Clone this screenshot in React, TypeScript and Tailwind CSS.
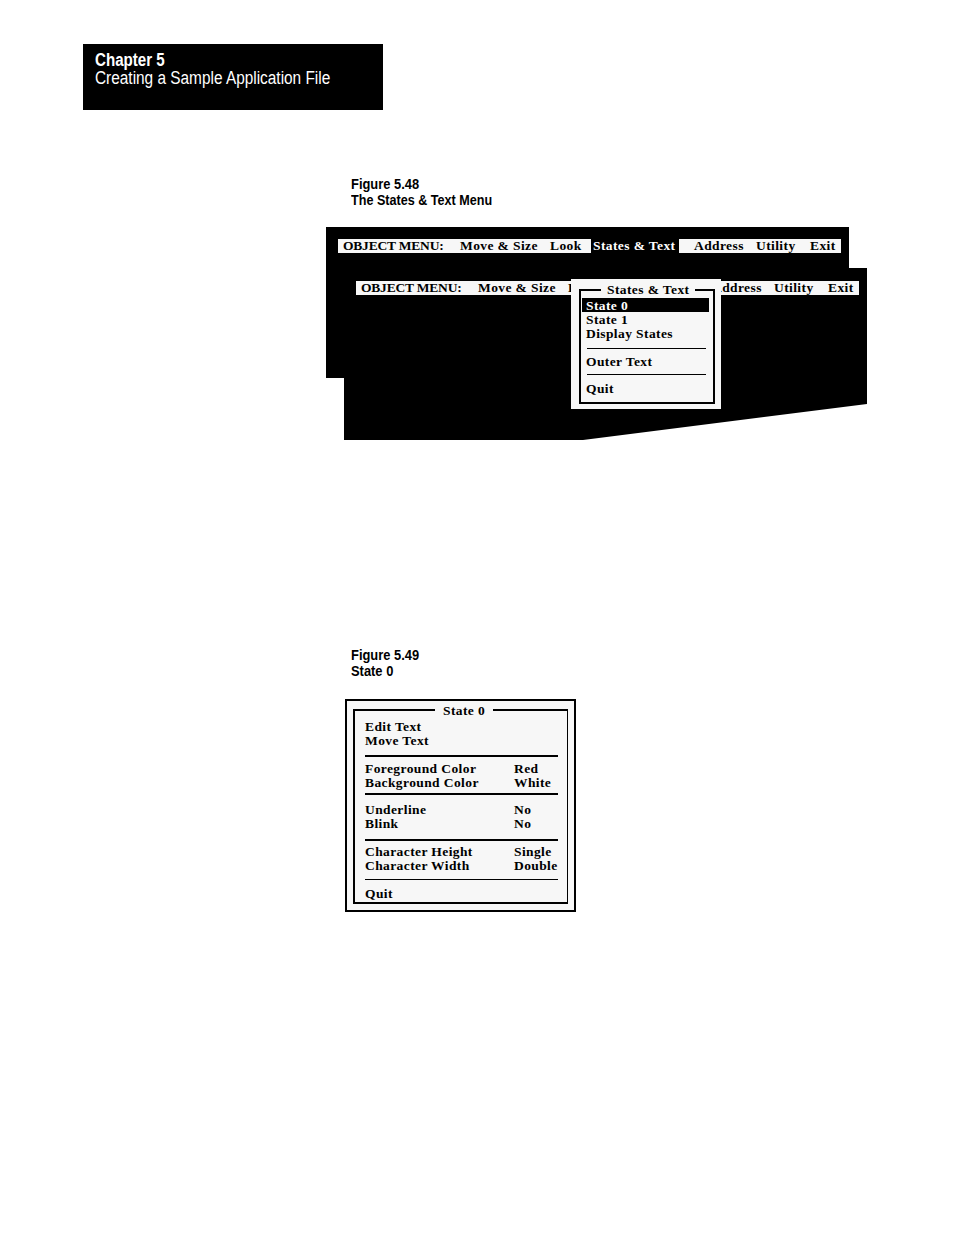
import React from "react";

const serif = "font-['Liberation_Serif',serif] font-bold text-[13.5px] leading-[14px] tracking-[0.4px] text-black";
const sans = "font-['Liberation_Sans',Arial,sans-serif]";

function MenuBar({ covered = false }: { covered?: boolean }) {
  return (
    <div className={`flex h-[14px] w-[503px] bg-[#f7f7f7] whitespace-nowrap ${serif}`}>
      <span className="w-[122px] pl-[5px] tracking-[-0.2px]">OBJECT MENU:</span>
      <span className="w-[90px]">Move &amp; Size</span>
      <span className="w-[41px]">Look</span>
      {covered ? (
        <span className="w-[88px]" />
      ) : (
        <span className="w-[88px] bg-black text-white pl-[2px]">States &amp; Text</span>
      )}
      <span className="ml-[15px] w-[62px]">Address</span>
      <span className="w-[54px]">Utility</span>
      <span>Exit</span>
    </div>
  );
}

function Row({ label, value }: { label: string; value?: string }) {
  return (
    <div className="flex h-[14px] pl-[10px] pt-[1px] whitespace-nowrap">
      <span className="w-[149px]">{label}</span>
      {value && <span>{value}</span>}
    </div>
  );
}

export default function App() {
  return (
    <div className="w-[954px] h-[1235px] bg-white overflow-hidden">
      {/* Chapter header */}
      <div className="ml-[83px] mt-[44px] w-[300px] h-[66px] bg-black pt-[7px] pl-[12px] text-white">
        <div className={`${sans} font-bold text-[18px] leading-[18px] origin-left scale-x-[0.84] whitespace-nowrap`}>
          Chapter 5
        </div>
        <div className={`${sans} text-[18px] leading-[18px] origin-left scale-x-[0.855] whitespace-nowrap`}>
          Creating a Sample Application File
        </div>
      </div>

      {/* Figure 5.48 caption */}
      <div className={`ml-[351px] mt-[66px] ${sans} font-bold text-[15px] leading-[16px] text-black`}>
        <div className="origin-left scale-x-[0.86] whitespace-nowrap">Figure 5.48</div>
        <div className="origin-left scale-x-[0.84] whitespace-nowrap">The States &amp; Text Menu</div>
      </div>

      {/* Figure 5.48 canvas */}
      <div className="relative ml-[326px] mt-[19px] w-[541px] h-[213px]">
        <svg className="absolute inset-0" width="541" height="213" viewBox="0 0 541 213">
          <polygon
            points="0,0 523,0 523,41 541,41 541,177 257,213 18,213 18,151 0,151"
            fill="#000"
          />
        </svg>
        <div className="absolute left-[12px] top-[12px]">
          <MenuBar />
        </div>
        <div className="absolute left-[30px] top-[54px]">
          <MenuBar covered />
        </div>
        {/* dropdown */}
        <div className="absolute left-[245px] top-[52px] w-[150px] h-[130px] bg-[#f7f7f7] pl-[8px] pt-[10px]">
          <div className={`relative w-[136px] h-[115px] border-2 border-black pt-[7px] pl-[1px] pr-[4px] ${serif}`}>
            <span className="absolute left-[20px] -top-[8px] px-[6px] bg-[#f7f7f7] whitespace-nowrap">
              States &amp; Text
            </span>
            <div className="h-[14px] bg-black text-white pl-[4px] pt-[1px] whitespace-nowrap">State 0</div>
            <div className="h-[14px] pl-[4px] pt-[1px] whitespace-nowrap">State 1</div>
            <div className="h-[14px] pl-[4px] pt-[1px] whitespace-nowrap">Display States</div>
            <div className="h-[8px]" />
            <div className="h-[1px] bg-black ml-[5px] mr-[3px]" />
            <div className="h-[5px]" />
            <div className="h-[14px] pl-[4px] pt-[1px] whitespace-nowrap">Outer Text</div>
            <div className="h-[6px]" />
            <div className="h-[1px] bg-black ml-[5px] mr-[3px]" />
            <div className="h-[6px]" />
            <div className="h-[14px] pl-[4px] pt-[1px] whitespace-nowrap">Quit</div>
          </div>
        </div>
      </div>

      {/* Figure 5.49 caption */}
      <div className={`ml-[351px] mt-[207px] ${sans} font-bold text-[15px] leading-[16px] text-black`}>
        <div className="origin-left scale-x-[0.86] whitespace-nowrap">Figure 5.49</div>
        <div className="origin-left scale-x-[0.86] whitespace-nowrap">State 0</div>
      </div>

      {/* State 0 box */}
      <div className="ml-[345px] mt-[20px] w-[231px] h-[213px] border-2 border-black bg-[#f7f7f7] pt-[8px] pl-[6px]">
        <div className={`relative w-[215px] h-[195px] border-2 border-r border-black pt-[8px] ${serif}`}>
          <span className="absolute left-[80px] -top-[7px] px-[8px] bg-[#f7f7f7] whitespace-nowrap">State 0</span>
          <Row label="Edit Text" />
          <Row label="Move Text" />
          <div className="h-[8px]" />
          <div className="h-[2px] bg-black ml-[10px] mr-[9px]" />
          <div className="h-[4px]" />
          <Row label="Foreground Color" value="Red" />
          <Row label="Background Color" value="White" />
          <div className="h-[4px]" />
          <div className="h-[2px] bg-black ml-[10px] mr-[9px]" />
          <div className="h-[7px]" />
          <Row label="Underline" value="No" />
          <Row label="Blink" value="No" />
          <div className="h-[9px]" />
          <div className="h-[2px] bg-black ml-[10px] mr-[9px]" />
          <div className="h-[3px]" />
          <Row label="Character Height" value="Single" />
          <Row label="Character Width" value="Double" />
          <div className="h-[7px]" />
          <div className="h-[1px] bg-black ml-[10px] mr-[9px]" />
          <div className="h-[6px]" />
          <Row label="Quit" />
        </div>
      </div>
    </div>
  );
}
